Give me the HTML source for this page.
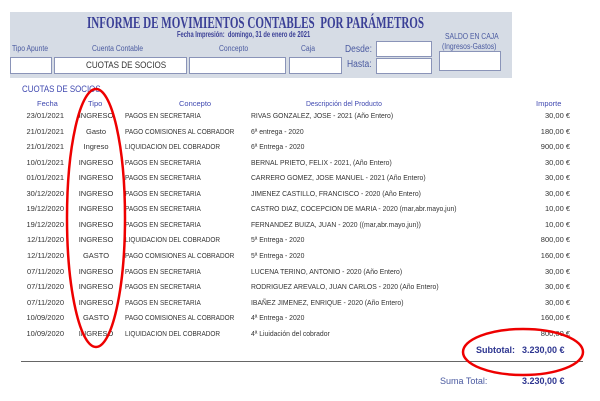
<!DOCTYPE html>
<html><head><meta charset="utf-8"><style>
body{margin:0;width:600px;height:401px;background:#fff;position:relative;overflow:hidden;font-family:"Liberation Sans",sans-serif;}
.a{position:absolute;white-space:nowrap;}
.hd{background:#d6dce5;position:absolute;left:10px;top:12px;width:502px;height:66px;}
.bx{position:absolute;background:#fff;border:1px solid #8a94b8;box-sizing:border-box;}
.lb{font-size:8px;color:#4a5aa0;transform:scaleX(0.85);transform-origin:left;}
.r{font-size:7.5px;color:#333;}
.c{transform:scaleX(0.86);transform-origin:left;}
.d{transform:scaleX(0.91);transform-origin:left;}
.ch{font-size:7.5px;color:#3f48b0;}
</style></head><body>
<div class="hd"></div>
<div class="a" style="left:87px;top:13px;font-family:'Liberation Serif',serif;font-weight:bold;font-size:17px;color:#3a3f96;transform:scaleX(0.65);transform-origin:left">INFORME DE MOVIMIENTOS CONTABLES&nbsp; POR PARÁMETROS</div>
<div class="a" style="left:177px;top:30px;font-size:8px;font-weight:bold;color:#3a3f96;transform:scaleX(0.72);transform-origin:left">Fecha Impresión:&nbsp; domingo, 31 de enero de 2021</div>
<div class="a lb" style="left:445px;top:32px">SALDO EN CAJA</div>
<div class="a lb" style="left:442px;top:42px">(Ingresos-Gastos)</div>
<div class="a lb" style="left:12px;top:44px">Tipo Apunte</div>
<div class="a lb" style="left:92px;top:44px">Cuenta Contable</div>
<div class="a lb" style="left:219px;top:44px">Concepto</div>
<div class="a lb" style="left:301px;top:44px">Caja</div>
<div class="a" style="left:345px;top:44px;font-size:10px;color:#4a5aa0;transform:scaleX(0.85);transform-origin:left">Desde:</div>
<div class="a" style="left:347px;top:59px;font-size:10px;color:#4a5aa0;transform:scaleX(0.85);transform-origin:left">Hasta:</div>
<div class="bx" style="left:10px;top:57px;width:42px;height:17px"></div>
<div class="bx" style="left:54px;top:57px;width:133px;height:17px"></div>
<div class="a" style="left:86px;top:60px;font-size:9.5px;color:#333;transform:scaleX(0.85);transform-origin:left">CUOTAS DE SOCIOS</div>
<div class="bx" style="left:189px;top:57px;width:97px;height:17px"></div>
<div class="bx" style="left:289px;top:57px;width:53px;height:17px"></div>
<div class="bx" style="left:376px;top:41px;width:56px;height:16px"></div>
<div class="bx" style="left:376px;top:58px;width:56px;height:16px"></div>
<div class="bx" style="left:439px;top:51px;width:62px;height:20px"></div>
<div class="a" style="left:22px;top:84px;font-size:9px;color:#3f48b0;transform:scaleX(0.88);transform-origin:left">CUOTAS DE SOCIOS</div>
<div class="a ch" style="left:37px;top:99px">Fecha</div>
<div class="a ch" style="left:88px;top:99px">Tipo</div>
<div class="a ch" style="left:179px;top:99px">Concepto</div>
<div class="a ch d" style="left:306px;top:99px">Descripción del Producto</div>
<div class="a ch" style="left:536px;top:99px">Importe</div>
<div id="rows"></div>
<script>
var d=[["23/01/2021","INGRESO","PAGOS EN SECRETARIA","RIVAS GONZALEZ, JOSE - 2021 (Año Entero)","30,00 €"],
["21/01/2021","Gasto","PAGO COMISIONES AL COBRADOR","6ª entrega - 2020","180,00 €"],
["21/01/2021","Ingreso","LIQUIDACION DEL COBRADOR","6ª Entrega - 2020","900,00 €"],
["10/01/2021","INGRESO","PAGOS EN SECRETARIA","BERNAL PRIETO, FELIX - 2021, (Año Entero)","30,00 €"],
["01/01/2021","INGRESO","PAGOS EN SECRETARIA","CARRERO  GOMEZ, JOSE MANUEL - 2021 (Año Entero)","30,00 €"],
["30/12/2020","INGRESO","PAGOS EN SECRETARIA","JIMENEZ CASTILLO, FRANCISCO - 2020 (Año Entero)","30,00 €"],
["19/12/2020","INGRESO","PAGOS EN SECRETARIA","CASTRO DIAZ, COCEPCION DE MARIA - 2020 (mar,abr.mayo,jun)","10,00 €"],
["19/12/2020","INGRESO","PAGOS EN SECRETARIA","FERNANDEZ BUIZA, JUAN - 2020 ((mar,abr.mayo,jun))","10,00 €"],
["12/11/2020","INGRESO","LIQUIDACION DEL COBRADOR","5ª Entrega - 2020","800,00 €"],
["12/11/2020","GASTO","PAGO COMISIONES AL COBRADOR","5ª Entrega - 2020","160,00 €"],
["07/11/2020","INGRESO","PAGOS EN SECRETARIA","LUCENA TERINO, ANTONIO - 2020 (Año Entero)","30,00 €"],
["07/11/2020","INGRESO","PAGOS EN SECRETARIA","RODRIGUEZ AREVALO, JUAN CARLOS - 2020 (Año Entero)","30,00 €"],
["07/11/2020","INGRESO","PAGOS EN SECRETARIA","IBAÑEZ JIMENEZ, ENRIQUE - 2020 (Año Entero)","30,00 €"],
["10/09/2020","GASTO","PAGO COMISIONES AL COBRADOR","4ª Entrega - 2020","160,00 €"],
["10/09/2020","INGRESO","LIQUIDACION DEL COBRADOR","4ª Liuidación del cobrador","800,00 €"]];
var h="";d.forEach(function(r,i){var y=111+i*15.55;
h+='<div class="a r" style="left:26px;top:'+y+'px;width:38px;text-align:right">'+r[0]+'</div>';
h+='<div class="a r" style="left:66px;top:'+y+'px;width:60px;text-align:center">'+r[1]+'</div>';
h+='<div class="a r c" style="left:125px;top:'+y+'px">'+r[2]+'</div>';
h+='<div class="a r d" style="left:251px;top:'+y+'px">'+r[3]+'</div>';
h+='<div class="a r" style="left:500px;top:'+y+'px;width:70px;text-align:right">'+r[4]+'</div>';});
document.getElementById("rows").innerHTML=h;
</script>
<div class="a" style="left:476px;top:345px;font-size:9px;font-weight:bold;color:#2d3590">Subtotal:</div>
<div class="a" style="left:522px;top:345px;font-size:9px;font-weight:bold;color:#2d3590">3.230,00 €</div>
<div class="a" style="left:21px;top:361px;width:562px;height:1px;background:#666"></div>
<div class="a" style="left:440px;top:376px;font-size:9px;color:#4a5aa0">Suma Total:</div>
<div class="a" style="left:522px;top:376px;font-size:9px;font-weight:bold;color:#2d3590">3.230,00 €</div>
<svg class="a" style="left:0;top:0" width="600" height="401">
<ellipse cx="96" cy="218" rx="29" ry="129" fill="none" stroke="#e00" stroke-width="2.5"/>
<ellipse cx="523" cy="352" rx="60" ry="23" fill="none" stroke="#e00" stroke-width="2.5"/>
</svg>
</body></html>
